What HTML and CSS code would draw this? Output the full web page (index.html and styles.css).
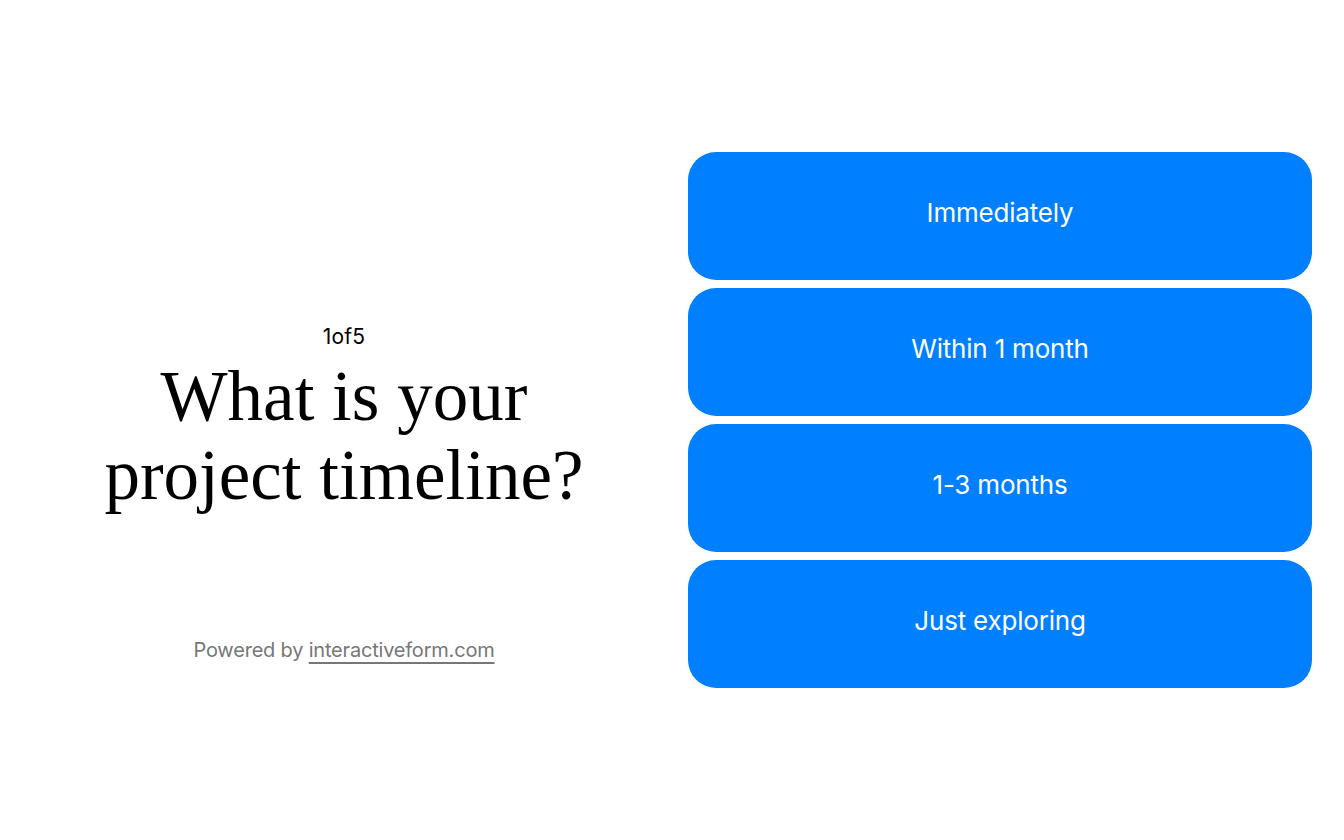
FILE: index.html
```html
<!DOCTYPE html>
<html lang="en">
<head>
<meta charset="utf-8">
<title>What is your project timeline?</title>
<link rel="stylesheet" href="styles.css">
</head>
<body>
<main class="page">
  <section class="left">
    <div class="spacer"></div>
    <div class="question">
      <div class="step">1of5</div>
      <h1 class="title">What is your project timeline?</h1>
    </div>
    <div class="footer">
      <span class="powered">Powered by <a class="brand" href="#">interactiveform.com</a></span>
    </div>
  </section>
  <section class="options">
    <button class="option">Immediately</button>
    <button class="option">Within 1 month</button>
    <button class="option">1-3 months</button>
    <button class="option">Just exploring</button>
  </section>
</main>
</body>
</html>
```
FILE: styles.css
```css
html, body {
  margin: 0;
  padding: 0;
  background: #ffffff;
}
.page {
  box-sizing: border-box;
  height: 840px;
  padding: 0 32px;
  display: grid;
  grid-template-columns: 624px 624px;
  column-gap: 32px;
  align-items: center;
}
.left {
  height: 536px;
  display: grid;
  grid-template-rows: 1fr auto 1fr;
  text-align: center;
}
.question {
  display: flex;
  flex-direction: column;
  align-items: center;
}
.step {
  font-family: Inter, "Liberation Sans", sans-serif;
  font-size: 21px;
  letter-spacing: 0.2px;
  color: #000;
  line-height: 24px;
}
.title {
  max-width: 500px;
  margin: 8px 0 0;
  font-family: "Liberation Serif", serif;
  font-weight: 400;
  font-size: 71px;
  line-height: 79px;
  color: #000;
}
.footer {
  display: flex;
  align-items: flex-end;
  justify-content: center;
  padding-bottom: 26px;
}
.powered {
  font-family: Inter, "Liberation Sans", sans-serif;
  font-size: 20px;
  letter-spacing: -0.2px;
  color: #777777;
  line-height: 24px;
}
.brand {
  color: #777777;
  text-decoration: underline;
  text-decoration-thickness: 2px;
  text-underline-offset: 5px;
}
.options {
  display: flex;
  flex-direction: column;
  gap: 8px;
}
.option {
  height: 128px;
  padding: 0 0 7px;
  border: none;
  border-radius: 28px;
  background: #007fff;
  color: #ffffff;
  font-family: Inter, "Liberation Sans", sans-serif;
  font-size: 26px;
  letter-spacing: -0.2px;
  cursor: pointer;
}
```
